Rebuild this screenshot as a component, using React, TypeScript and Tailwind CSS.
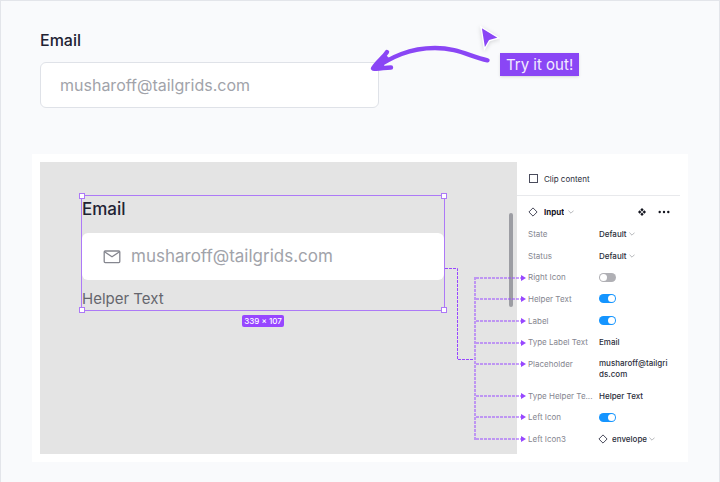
import React from 'react'

const connectorRows = [116, 137, 159, 181, 202, 234, 255, 277]

function Chevron() {
    return (
        <svg className="pointer-events-none h-1 w-[6px] shrink-0" viewBox="0 0 6 4" fill="none" stroke="#a3a4aa" strokeWidth="0.8">
            <path d="M0.4 0.6 3 3.2 5.6 0.6" />
        </svg>
    )
}

function Diamond() {
    return (
        <svg className="h-[10px] w-[10px] shrink-0" viewBox="0 0 10 10" fill="none" stroke="#4a4c5c" strokeWidth="1">
            <path d="M5 0.9 9.1 5 5 9.1 0.9 5Z" />
        </svg>
    )
}

function Row({ id, label, children }: { id: string; label: string; children: React.ReactNode }) {
    return (
        <div className="flex items-start">
            <label htmlFor={id} className="w-[71px] shrink-0 whitespace-nowrap leading-3 text-[#85868f]">{label}</label>
            <div className="flex min-h-3 min-w-0 flex-1 items-center">{children}</div>
        </div>
    )
}

function Select({ id, value }: { id: string; value: string }) {
    return (
        <>
            <select id={id} className="mr-[2px] h-3 appearance-none bg-transparent font-medium leading-3 outline-none [field-sizing:content]">
                <option>{value}</option>
            </select>
            <Chevron />
        </>
    )
}

function Toggle({ id, on }: { id: string; on?: boolean }) {
    return (
        <input
            id={id}
            type="checkbox"
            defaultChecked={on}
            className="flex h-[9px] w-[17px] appearance-none items-center rounded-full bg-[#b0b0b5] p-px before:h-[7px] before:w-[7px] before:rounded-full before:bg-white checked:justify-end checked:bg-[#1595ff]"
        />
    )
}

function TextValue({ id, value }: { id: string; value: string }) {
    return <input id={id} type="text" defaultValue={value} className="h-3 w-full bg-transparent font-medium leading-3 outline-none" />
}

function TryIt() {
    return (
        <section className="px-2 pt-[27px]">
            <div className="relative w-[339px]">
                <label htmlFor="email" className="block text-base font-medium leading-6 text-[#212233]">Email</label>
                <input
                    id="email"
                    type="email"
                    placeholder="musharoff@tailgrids.com"
                    className="mt-[10px] h-[46px] w-full rounded-md border border-[#dfe2e8] bg-white px-[19px] text-base text-[#212233] outline-none placeholder:text-[#a1a3aa]"
                />

                {/* hand drawn arrow */}
                <svg className="pointer-events-none absolute -top-2 left-[325px] h-[60px] w-[135px]" viewBox="365 20 135 60" fill="none">
                    <path
                        d="M487.500 60.300C469 56 457 48 435 48C409 48 392 57 374 68.500M387 52C383 58 377 62 373 68.500C379 69.500 384 67.500 391 67.500"
                        stroke="#8a46f5"
                        strokeWidth="4.400"
                        strokeLinecap="round"
                        strokeLinejoin="round"
                    />
                    <path d="M386 55 374 69 389 67C382 66.500 382 64 390 59Z" fill="#8a46f5" />
                    <path d="M481 27 499 38 489.500 40.500 484.500 49Z" fill="#8a46f5" stroke="#fff" strokeWidth="1.400" className="drop-shadow-sm" />
                </svg>
                <span className="absolute left-[460px] top-[25px] whitespace-nowrap bg-[#8a46f5] px-[6px] text-[15px] leading-[23px] text-[#f3ecff] shadow">
                    Try it out!
                </span>
            </div>
        </section>
    )
}

function Canvas() {
    return (
        <div className="relative min-w-0 flex-1 bg-[#e4e4e4] pl-[41px] pr-[72px] pt-[33px]">
            <div className="relative border border-[#ad79f7]">
                <label htmlFor="canvas-email" className="block text-[17px] font-medium leading-[26px] text-[#212233]">Email</label>
                <div className="mt-[11px] flex h-[47px] items-center gap-[10px] rounded-md bg-white pl-[21px]">
                    <svg className="h-[14px] w-[18px] shrink-0" viewBox="0 0 18 14" fill="none" stroke="#85868f" strokeWidth="1.300" strokeLinejoin="round">
                        <rect x="1.200" y="1" width="15.600" height="11.600" rx="1" />
                        <path d="M1.500 1.800 9 6.800 16.500 1.800" />
                    </svg>
                    <input
                        id="canvas-email"
                        type="email"
                        placeholder="musharoff@tailgrids.com"
                        className="mt-px min-w-0 flex-1 text-[17px] text-[#212233] outline-none placeholder:text-[#a1a3aa]"
                    />
                </div>
                <p className="pt-[7px] text-[15px] leading-[23px] text-[#65666d]">Helper Text</p>

                {/* resize handles */}
                <span className="absolute -left-[3px] -top-[3px] h-[6px] w-[6px] border border-[#ad79f7] bg-white" />
                <span className="absolute -right-[3px] -top-[3px] h-[6px] w-[6px] border border-[#ad79f7] bg-white" />
                <span className="absolute -bottom-[3px] -left-[3px] h-[6px] w-[6px] border border-[#ad79f7] bg-white" />
                <span className="absolute -bottom-[3px] -right-[3px] h-[6px] w-[6px] border border-[#ad79f7] bg-white" />
            </div>
            <div className="mt-1 flex justify-center">
                <span className="rounded-xs bg-[#9747ff] px-[2px] text-[8px] font-medium leading-3 text-white">339 × 107</span>
            </div>

            <span className="absolute right-1 top-[51px] h-[94px] w-1 rounded-full bg-[#9c9da3]" />

            {/* dashed lines from the component to its properties */}
            <svg className="pointer-events-none absolute -right-[9px] top-0 h-[292px] w-[82px]" viewBox="0 0 82 292" fill="none">
                <path d="M1 106.500H13.500V197.500H30" stroke="#9747ff" strokeDasharray="3 1" />
                <path d="M31 115V278" stroke="#9747ff" strokeOpacity="0.500" strokeWidth="2" strokeDasharray="3 1" />
                {connectorRows.map((y) => (
                    <g key={y}>
                        <path d={`M32 ${y}H77`} stroke="#9747ff" strokeOpacity="0.500" strokeWidth="2" strokeDasharray="3 1" />
                        <path d={`M77 ${y - 3}L82 ${y}L77 ${y + 3}Z`} fill="#9747ff" />
                    </g>
                ))}
            </svg>
        </div>
    )
}

function Properties() {
    return (
        <div className="flex w-[163px] shrink-0 flex-col text-[8px] text-[#2b2d3a]">
            <div className="flex h-[34px] items-center border-b border-[#e8e9ec] pl-3">
                <input id="clip" type="checkbox" className="h-[9px] w-[9px] appearance-none border border-[#4a4c5c]" />
                <label htmlFor="clip" className="pl-[6px] leading-3">Clip content</label>
            </div>

            <div className="flex items-center pl-[11px] pr-[10px] pt-[10px]">
                <Diamond />
                <select id="component" aria-label="Component" className="ml-[6px] mr-1 h-3 appearance-none font-bold leading-3 text-[#14151f] outline-none [field-sizing:content]">
                    <option>Input</option>
                </select>
                <Chevron />
                <button type="button" aria-label="Component options" className="ml-auto">
                    <svg className="h-2 w-2" viewBox="0 0 8 8" fill="#14151f">
                        <path d="M4 0 5.700 1.700 4 3.400 2.300 1.700ZM4 4.600 5.700 6.300 4 8 2.300 6.300ZM1.700 2.300 3.400 4 1.700 5.700 0 4ZM6.300 2.300 8 4 6.300 5.700 4.600 4Z" />
                    </svg>
                </button>
                <button type="button" aria-label="More" className="ml-3">
                    <svg className="h-2 w-3" viewBox="0 0 12 8" fill="#14151f">
                        <circle cx="1.700" cy="4" r="1.200" />
                        <circle cx="6" cy="4" r="1.200" />
                        <circle cx="10.300" cy="4" r="1.200" />
                    </svg>
                </button>
            </div>

            <div className="flex flex-1 flex-col justify-between pb-[9px] pl-[11px] pt-[10px]">
                <Row id="state" label="State"><Select id="state" value="Default" /></Row>
                <Row id="status" label="Status"><Select id="status" value="Default" /></Row>
                <Row id="right-icon" label="Right Icon"><Toggle id="right-icon" /></Row>
                <Row id="helper" label="Helper Text"><Toggle id="helper" on /></Row>
                <Row id="label" label="Label"><Toggle id="label" on /></Row>
                <Row id="label-text" label="Type Label Text"><TextValue id="label-text" value="Email" /></Row>
                <Row id="placeholder" label="Placeholder">
                    <textarea id="placeholder" rows={2} defaultValue="musharoff@tailgrids.com" className="h-[22px] w-[70px] resize-none overflow-hidden break-all bg-transparent font-medium leading-[11px] outline-none" />
                </Row>
                <Row id="helper-text" label="Type Helper Te..."><TextValue id="helper-text" value="Helper Text" /></Row>
                <Row id="left-icon" label="Left Icon"><Toggle id="left-icon" on /></Row>
                <Row id="left-icon3" label="Left Icon3">
                    <span className="-ml-px pr-1"><Diamond /></span>
                    <Select id="left-icon3" value="envelope" />
                </Row>
            </div>
        </div>
    )
}

function App() {
    return (
        <main className="min-h-screen border border-[#e3e5ea] bg-[#f9fafc] px-[31px] pb-5 font-['Inter',sans-serif]">
            <TryIt />
            <section className="mt-[46px] flex bg-white p-2">
                <div className="flex min-h-[292px] min-w-0 flex-1">
                    <Canvas />
                    <Properties />
                </div>
            </section>
        </main>
    )
}

export default App
